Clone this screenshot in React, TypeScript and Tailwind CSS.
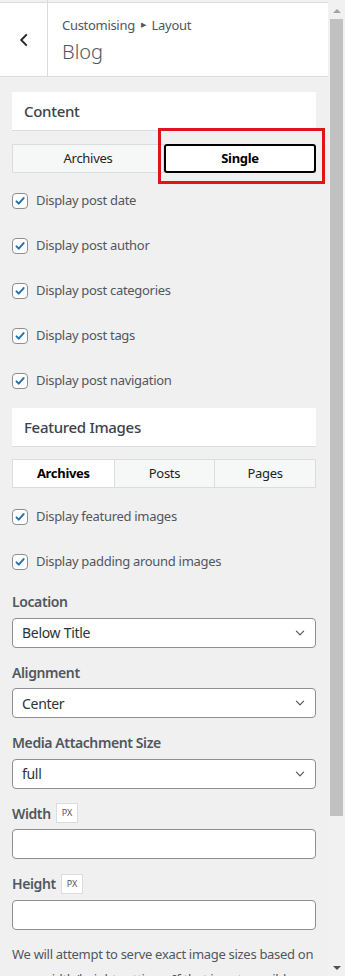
import React from "react"

const font = { fontFamily: '"Noto Sans", "Open Sans", sans-serif' }

function Check() {
  return (
    <span className="flex h-4 w-4 shrink-0 items-center justify-center rounded-[4px] border border-[#8c8f94] bg-white">
      <svg width="16" height="16" viewBox="0 0 20 20" fill="none">
        <path d="M5 10.5l3.2 3.3 7-8" stroke="#2271b1" strokeWidth="2.8" strokeLinecap="round" strokeLinejoin="round" />
      </svg>
    </span>
  )
}

function CheckRow({ label }: { label: string }) {
  return (
    <div className="flex h-[45px] items-start pt-[2px]">
      <label className="flex items-center gap-2 text-[13px] tracking-[-0.3px] text-[#50575e]">
        <Check />
        {label}
      </label>
    </div>
  )
}

function SectionTitle({ title }: { title: string }) {
  return (
    <div className="flex h-[39px] items-center border-b border-[#dcdcde] bg-white px-3 text-[15px] font-medium tracking-[-0.3px] text-[#3c434a]">
      {title}
    </div>
  )
}

function Select({ value }: { value: string }) {
  return (
    <div className="flex h-[30px] items-center justify-between rounded-[4px] border border-[#8c8f94] bg-white pl-[9px] pr-[9px] text-[14px] tracking-[-0.3px] text-[#2c3338]">
      <span>{value}</span>
      <svg width="12" height="12" viewBox="0 0 20 20" fill="none">
        <path d="M4 7l6 6 6-6" stroke="#50575e" strokeWidth="2" strokeLinecap="round" strokeLinejoin="round" />
      </svg>
    </div>
  )
}

function FieldLabel({ text, unit }: { text: string; unit?: boolean }) {
  return (
    <div className="flex h-[25px] items-center gap-[5px] text-[14px] font-semibold tracking-[-0.4px] text-[#50575e]">
      {text}
      {unit && (
        <span className="flex h-[20px] items-center border border-[#dcdcde] bg-white px-[5px] text-[9px] font-normal tracking-normal text-[#50575e]">
          PX
        </span>
      )}
    </div>
  )
}

function TextInput() {
  return <div className="mt-[3.5px] h-[30px] rounded-[4px] border border-[#8c8f94] bg-white" />
}

export default function App() {
  return (
    <div className="flex h-[976px] w-[345px] overflow-hidden bg-[#f0f0f0]" style={font}>
      <div className="w-[328px]">
        {/* top strip */}
        <div className="flex h-[3px] border-b border-[#dcdcde]">
          <div className="w-[48px] border-r border-[#dcdcde]" />
        </div>

        {/* header */}
        <div className="flex h-[74px] border-b border-[#dcdcde] bg-white">
          <div className="flex w-[48px] items-center justify-center border-r border-[#dcdcde]">
            <svg width="14" height="14" viewBox="0 0 20 20" fill="none">
              <path d="M13 3l-7 7 7 7" stroke="#1d2327" strokeWidth="2.6" strokeLinecap="square" />
            </svg>
          </div>
          <div className="flex flex-col pl-[14px] pt-[13px]">
            <div className="flex items-center gap-[6px] text-[13px] leading-[18px] tracking-[-0.3px] text-[#50575e]">
              Customising <span className="text-[7px]">▶</span> Layout
            </div>
            <div className="mt-[5px] text-[20px] font-light leading-[26px] text-[#50575e]">Blog</div>
          </div>
        </div>

        <div className="flex flex-col px-3 pt-[15px]">
          <SectionTitle title="Content" />

          <div className="relative mt-[13px] grid h-[29px] grid-cols-2">
            <div className="flex items-center justify-center border border-[#dcdcde] bg-[#f6f7f7] text-[13px] tracking-[-0.3px] text-[#1d2327]">
              Archives
            </div>
            <div className="flex items-center justify-center rounded-[3px] border-2 border-black bg-white text-[13px] font-bold tracking-[-0.3px] text-black">
              Single
            </div>
            <div className="pointer-events-none absolute -top-[16px] left-[146px] h-[56px] w-[167px] border-[3px] border-[#e3131b]" />
          </div>

          <div className="mt-[16px] flex flex-col">
            <CheckRow label="Display post date" />
            <CheckRow label="Display post author" />
            <CheckRow label="Display post categories" />
            <CheckRow label="Display post tags" />
            <CheckRow label="Display post navigation" />
          </div>

          <div className="mt-[-6px]">
            <SectionTitle title="Featured Images" />
          </div>

          <div className="mt-[12px] grid h-[29px] grid-cols-3 border border-[#dcdcde]">
            <div className="flex items-center justify-center bg-white text-[13px] font-bold tracking-[-0.3px] text-black">
              Archives
            </div>
            <div className="flex items-center justify-center border-l border-[#dcdcde] bg-[#f6f7f7] text-[13px] tracking-[-0.3px] text-[#1d2327]">
              Posts
            </div>
            <div className="flex items-center justify-center border-l border-[#dcdcde] bg-[#f6f7f7] text-[13px] tracking-[-0.3px] text-[#1d2327]">
              Pages
            </div>
          </div>

          <div className="mt-[17px] flex flex-col">
            <CheckRow label="Display featured images" />
            <CheckRow label="Display padding around images" />
          </div>

          <div className="mt-[-6px] flex flex-col">
            <FieldLabel text="Location" />
            <div className="mt-[3.5px]">
              <Select value="Below Title" />
            </div>
            <div className="mt-[12px]">
              <FieldLabel text="Alignment" />
            </div>
            <div className="mt-[3.5px]">
              <Select value="Center" />
            </div>
            <div className="mt-[12px]">
              <FieldLabel text="Media Attachment Size" />
            </div>
            <div className="mt-[3.5px]">
              <Select value="full" />
            </div>
            <div className="mt-[12px]">
              <FieldLabel text="Width" unit />
            </div>
            <TextInput />
            <div className="mt-[12px]">
              <FieldLabel text="Height" unit />
            </div>
            <TextInput />
            <p className="mt-[12px] text-[13px] leading-[25px] tracking-[-0.3px] text-[#50575e]">
              We will attempt to serve exact image sizes based on your width/height settings. If that is not possible, we
              will use the closest available size.
            </p>
          </div>
        </div>
      </div>

      {/* scrollbar */}
      <div className="flex w-[17px] flex-col items-center bg-[#f1f1f1] pt-[3px]">
        <div className="flex h-[16px] w-full shrink-0 items-center justify-center">
          <div className="h-0 w-0 border-x-[4px] border-b-[4px] border-x-transparent border-b-[#a3a3a3]" />
        </div>
        <div className="h-[797px] w-[13px] shrink-0 bg-[#c1c1c1]" />
        <div className="flex-1" />
        <div className="mb-[6px] h-0 w-0 border-x-[4px] border-t-[4px] border-x-transparent border-t-[#505050]" />
      </div>
    </div>
  )
}
